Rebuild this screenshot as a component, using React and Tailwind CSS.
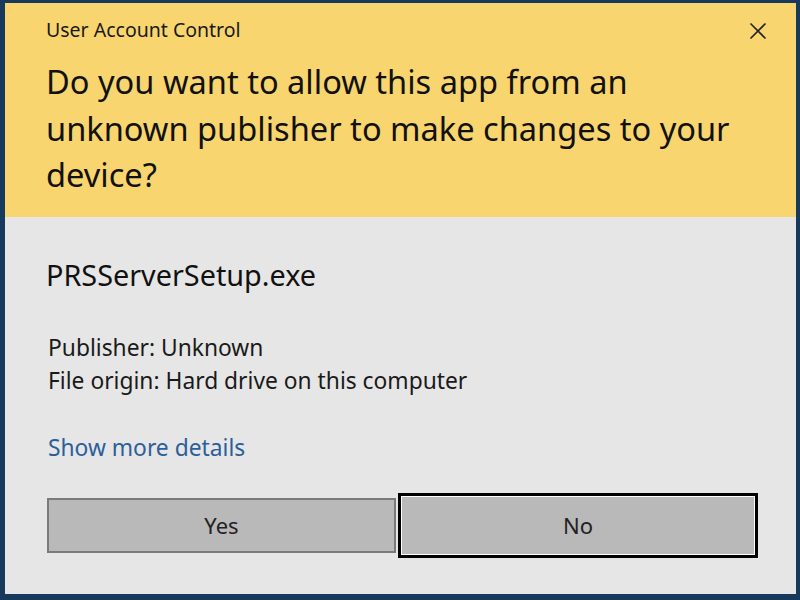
export default function App() {
  const font = { fontFamily: '"Noto Sans", "Open Sans", sans-serif' };
  return (
    <div className="w-[800px] h-[600px] bg-[#17395b] pt-[3px] pl-[5px] pr-[4px] pb-[6px]" style={font}>
      <div className="w-full h-full flex flex-col bg-[#e6e6e6]">
        <div className="h-[214px] shrink-0 bg-[#f8d56f] pl-[41px] pr-[30px] pt-[16px] relative">
          <div className="text-[19.5px] leading-[22px] text-[#1a1a1a]">User Account Control</div>
          <button className="absolute right-[28px] top-[18px] w-[20px] h-[20px] flex items-center justify-center">
            <svg width="18" height="18" viewBox="0 0 18 18" fill="none" stroke="#222" strokeWidth="1.6">
              <path d="M1.5 1.5 L16.5 16.5 M16.5 1.5 L1.5 16.5" />
            </svg>
          </button>
          <div className="mt-[18px] text-[32.6px] leading-[46.5px] text-[#111] whitespace-nowrap">
            <div>Do you want to allow this app from an</div>
            <div>unknown publisher to make changes to your</div>
            <div>device?</div>
          </div>
        </div>
        <div className="flex-1 pl-[41px] pr-[37px] pt-[40px]">
          <div className="text-[28.8px] leading-[36px] text-[#111]">PRSServerSetup.exe</div>
          <div className="mt-[38px] pl-[2px] text-[22.8px] leading-[33px] text-[#1a1a1a]">
            <div>Publisher: Unknown</div>
            <div>File origin: Hard drive on this computer</div>
          </div>
          <div className="mt-[34px] pl-[2px] text-[22.8px] leading-[33px] text-[#2c5f99]">Show more details</div>
          <div className="mt-[29px] flex items-center gap-[2px] pl-[1px]">
            <button className="w-[349px] h-[55px] bg-[#b9b9b9] border-2 border-[#7a7a7a] text-[22px] text-[#222]">Yes</button>
            <button className="w-[360px] h-[65px] border-[3px] border-black p-0">
              <div className="w-full h-full border border-white bg-[#b9b9b9] flex items-center justify-center text-[22px] text-[#222]">No</div>
            </button>
          </div>
        </div>
      </div>
    </div>
  );
}
